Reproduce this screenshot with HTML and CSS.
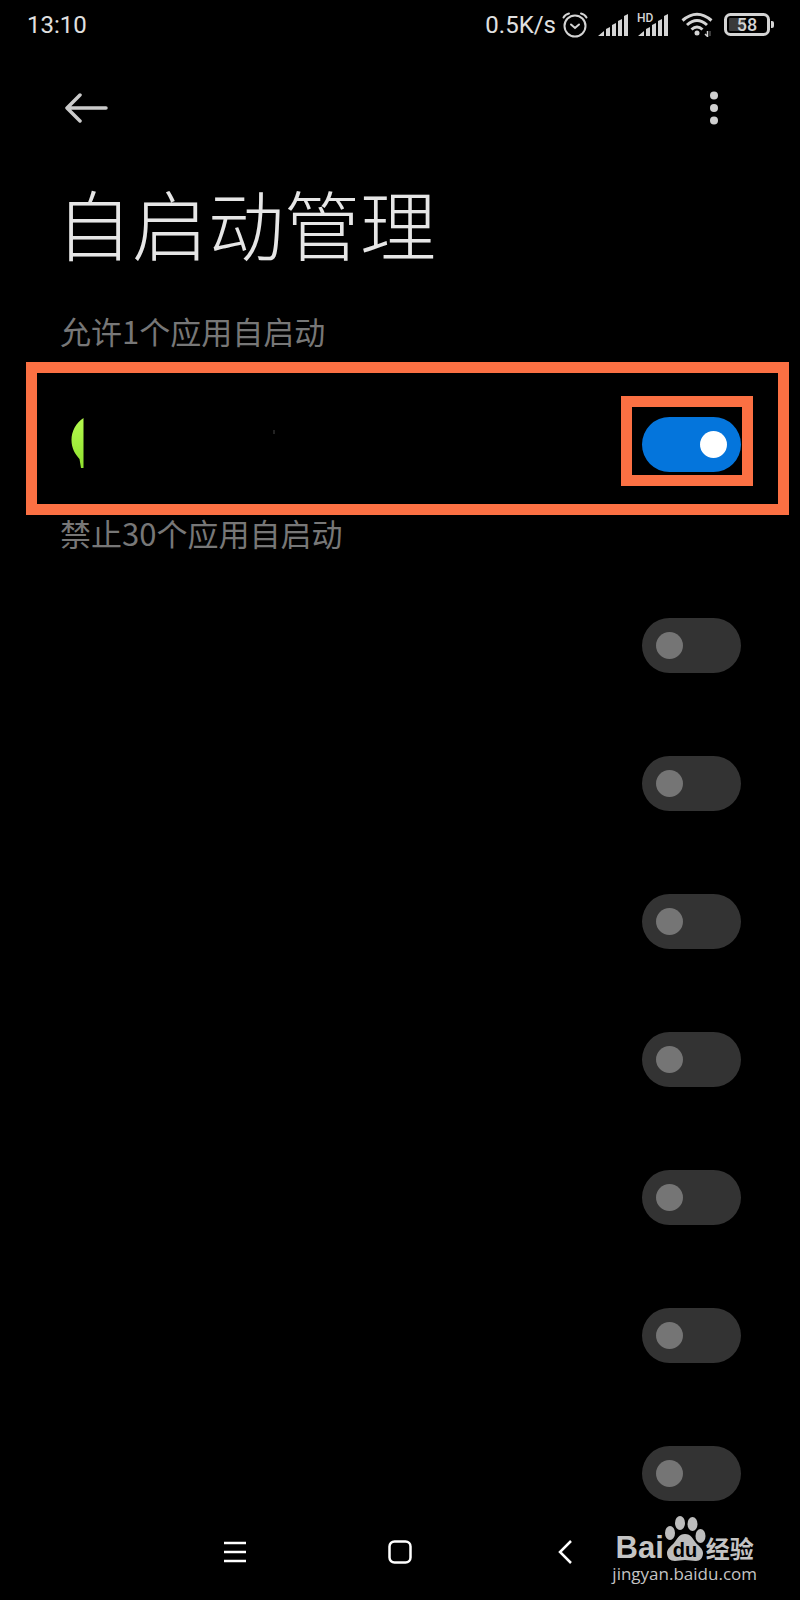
FILE: index.html
```html
<!DOCTYPE html>
<html lang="zh-CN">
<head>
    <meta charset="UTF-8">
    <meta name="viewport" content="width=device-width, initial-scale=1.0">
    <title>自启动管理</title>
    <link rel="stylesheet" href="styles.css">
</head>
<body>
    <div class="status-bar">
        <span class="clock">13:10</span>
        <div class="status-icons">
            <span class="speed">0.5K/s</span>
            <svg class="alarm" width="26" height="26" viewBox="0 0 26 26" fill="none" stroke="#d4d4d4" stroke-width="2" stroke-linecap="round">
                <circle cx="13" cy="14" r="10.5"/>
                <path d="M9 12.500l4 3.500 4-3.500M1.500 5.500Q3 2.500 7 1.500M24.500 5.500Q23 2.500 19 1.500"/>
            </svg>
            <svg class="signal" width="31" height="24" viewBox="0 0 31 24" fill="#d4d4d4">
                <path d="M0 23l6-5v5zM8 16l4-2v9H8zM14 12l4-2v13h-4zM20 8l4-2v17h-4zM26 3l4-2v22h-4z"/>
            </svg>
            <svg class="signal-hd" width="32" height="28" viewBox="0 -2 32 28" fill="#d4d4d4">
                <path d="M1 23l6-5v5zM9 16l4-2v9H9zM15 12l4-2v13h-4zM21 8l4-2v17h-4zM27 3l4-2v22h-4z"/>
                <text class="hd-text" x="0" y="9">HD</text>
            </svg>
            <svg class="wifi" width="32" height="26" viewBox="0 0 32 26" fill="none" stroke="#d4d4d4" stroke-width="3">
                <path d="M1.500 8.500Q16-4 30.500 8.500M6 13Q16 4 26 13M10.500 17.500Q16 12.500 21.500 17.500"/>
                <circle cx="16" cy="21" r="2.500" fill="#d4d4d4" stroke="none"/>
                <path d="M26.500 19v6M24 22l2 2" stroke-width="1.500"/>
                <path d="M29 19v5" stroke="#777" stroke-width="1"/>
            </svg>
            <svg class="battery" width="51" height="24" viewBox="0 0 51 24">
                <rect x="1.500" y="1.500" width="43" height="20" rx="5" fill="none" stroke="#d4d4d4" stroke-width="3"/>
                <rect x="5" y="5" width="16" height="13" rx="1" fill="#3a3a3a"/>
                <path d="M47 8h1q2 0 2 2v3q0 2-2 2h-1z" fill="#d4d4d4"/>
                <text class="battery-text" x="23" y="18" text-anchor="middle">58</text>
            </svg>
        </div>
    </div>

    <header class="toolbar">
        <button class="icon-btn" type="button" aria-label="返回">
            <svg width="44" height="30" viewBox="0 0 44 30" fill="none" stroke="#cbcbcb" stroke-width="3.500" stroke-linecap="round" stroke-linejoin="round">
                <path d="M15 2L2 15l13 13M3 15h38"/>
            </svg>
        </button>
        <button class="icon-btn" type="button" aria-label="更多">
            <svg width="8" height="34" viewBox="0 0 8 34" fill="#d0d0d0">
                <circle cx="4" cy="4.500" r="4"/>
                <circle cx="4" cy="17" r="4"/>
                <circle cx="4" cy="29.500" r="4"/>
            </svg>
        </button>
    </header>

    <main>
        <h1>自启动管理</h1>

        <h2 class="allowed-title">允许1个应用自启动</h2>
        <div class="highlight">
            <svg class="app-icon" width="206" height="56" viewBox="0 0 206 56">
                <defs>
                    <linearGradient id="leaf" x1="0" y1="0" x2="0" y2="1">
                        <stop offset="0" stop-color="#b4fa4e"/>
                        <stop offset="1" stop-color="#8fe02e"/>
                    </linearGradient>
                </defs>
                <path d="M12.500 5C5 10 .5 18 .5 27c0 8 3.500 14 8 19l1.500 9h2.500z" fill="url(#leaf)"/>
                <path d="M203 17v4" stroke="#444" stroke-width="1"/>
            </svg>
            <div class="highlight-switch">
                <input class="switch" type="checkbox" aria-label="允许自启动" checked>
            </div>
        </div>

        <h2 class="denied-title">禁止30个应用自启动</h2>
        <ul class="app-list">
            <li><input class="switch" type="checkbox" aria-label="应用1"></li>
            <li><input class="switch" type="checkbox" aria-label="应用2"></li>
            <li><input class="switch" type="checkbox" aria-label="应用3"></li>
            <li><input class="switch" type="checkbox" aria-label="应用4"></li>
            <li><input class="switch" type="checkbox" aria-label="应用5"></li>
            <li><input class="switch" type="checkbox" aria-label="应用6"></li>
            <li><input class="switch" type="checkbox" aria-label="应用7"></li>
        </ul>
    </main>

    <nav class="nav-bar">
        <button class="icon-btn" type="button" aria-label="最近任务">
            <svg width="24" height="24" viewBox="0 0 24 24" stroke="#fff" stroke-width="2.500">
                <path d="M1 3h22M1 12h22M1 21h22"/>
            </svg>
        </button>
        <button class="icon-btn" type="button" aria-label="主屏幕">
            <svg width="24" height="24" viewBox="0 0 24 24" fill="none" stroke="#fff" stroke-width="2.500">
                <rect x="1.500" y="1.500" width="21" height="21" rx="5"/>
            </svg>
        </button>
        <button class="icon-btn" type="button" aria-label="返回上一页">
            <svg width="14" height="24" viewBox="0 0 14 24" fill="none" stroke="#fff" stroke-width="2.500">
                <path d="M13 1L2 12l11 11"/>
            </svg>
        </button>
    </nav>

    <div class="watermark">
        <div class="watermark-logo">
            <span class="bai">Bai</span>
            <svg class="paw" width="42" height="46" viewBox="0 0 42 46" fill="#bdbdbd">
                <ellipse cx="6" cy="17" rx="5" ry="7"/>
                <ellipse cx="16" cy="7" rx="5" ry="7"/>
                <ellipse cx="28.500" cy="8" rx="5" ry="7"/>
                <ellipse cx="36.500" cy="20" rx="5" ry="7"/>
                <path d="M21 18c6 0 8 5 11 9 3 3 7 6 7 10 0 5-3 8-7 8-4 0-7-1-11-1s-7 1-10 1c-5 0-8-3-8-8 0-4 4-7 7-10 3-4 5-9 11-9z"/>
                <text class="du" x="21" y="41" text-anchor="middle">du</text>
            </svg>
            <span class="jingyan">经验</span>
        </div>
        <div class="watermark-url">jingyan.baidu.com</div>
    </div>
</body>
</html>
```
FILE: styles.css
```css
* {
    margin: 0;
    padding: 0;
    box-sizing: border-box;
}

body {
    position: relative;
    min-height: 100vh;
    background: #000;
    color: #e0e0e0;
    font-family: Roboto, "Noto Sans CJK SC", sans-serif;
}

/* Status bar */
.status-bar {
    display: flex;
    align-items: center;
    justify-content: space-between;
    height: 50px;
    padding: 0 25px 0 27px;
    font-size: 24px;
    line-height: 30px;
}

.status-icons {
    display: flex;
    align-items: center;
}

.speed {
    margin-right: 6px;
}

.alarm {
    margin-right: 10px;
}

.signal {
    margin-right: 8px;
}

.signal-hd {
    margin-right: 12px;
}

.wifi {
    margin-right: 11px;
}

.hd-text {
    font-size: 12px;
    font-weight: 500;
}

.battery-text {
    font-size: 18px;
    font-weight: 500;
}

.hd-text,
.battery-text {
    fill: #d4d4d4;
}

/* Toolbar */
.toolbar {
    display: flex;
    align-items: center;
    justify-content: space-between;
    height: 116px;
    padding: 0 82px 0 65px;
}

.icon-btn {
    display: flex;
    background: none;
    border: none;
    cursor: pointer;
}

h1 {
    margin-left: 56px;
    color: #e6e6e6;
    font-family: "Noto Sans CJK SC", sans-serif;
    font-size: 76px;
    font-weight: 300;
    line-height: 112px;
}

h2 {
    margin-left: 60px;
    color: #777;
    font-family: "Noto Sans CJK SC", sans-serif;
    font-size: 31px;
    font-weight: 400;
    line-height: 36px;
}

.allowed-title {
    margin-top: 35px;
}

/* Highlighted app row */
.highlight {
    display: flex;
    align-items: center;
    justify-content: space-between;
    margin: 13px 11px 0 26px;
    padding: 23px 25px 18px 34px;
    border: 11px solid #fb7043;
}

.highlight-switch {
    padding: 10px 1px 3px 10px;
    border: 11px solid #fb7043;
}

/* Switches */
.switch {
    display: block;
    position: relative;
    width: 99px;
    height: 55px;
    border-radius: 28px;
    background: #333;
    appearance: none;
    cursor: pointer;
}

.switch::before {
    content: "";
    position: absolute;
    top: 14px;
    left: 14px;
    width: 27px;
    height: 27px;
    border-radius: 50%;
    background: #757575;
}

.switch:checked {
    background: #0475dc;
}

.switch:checked::before {
    left: 58px;
    background: #fff;
}

.app-list {
    margin-top: 25px;
    list-style: none;
}

.app-list li {
    display: flex;
    align-items: center;
    justify-content: flex-end;
    height: 138px;
    padding-right: 59px;
}

/* System navigation */
.nav-bar {
    display: grid;
    grid-template-columns: repeat(3, 1fr);
    justify-items: center;
    margin-top: -2px;
    padding: 0 19%;
}

/* Watermark */
.watermark {
    position: absolute;
    right: 43px;
    bottom: 14px;
    color: #c4c4c4;
}

.watermark-logo {
    display: flex;
    align-items: flex-end;
    justify-content: center;
}

.bai {
    font-family: "Liberation Sans", sans-serif;
    font-size: 31px;
    font-weight: 700;
    line-height: 28px;
}

.du {
    fill: #000;
    font-family: "Liberation Sans", sans-serif;
    font-size: 20px;
    font-weight: 700;
}

.jingyan {
    font-family: "Noto Sans CJK SC", sans-serif;
    font-size: 24px;
    font-weight: 700;
    line-height: 28px;
}

.watermark-url {
    font-family: "Open Sans", sans-serif;
    font-size: 17px;
    line-height: 24px;
}
```
